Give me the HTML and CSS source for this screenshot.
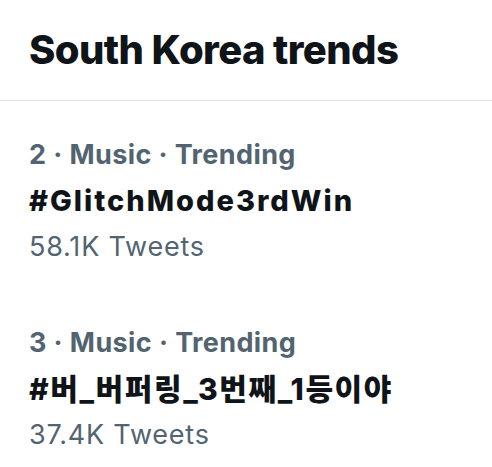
FILE: index.html
```html
<!DOCTYPE html>
<html>
<head>
  <meta name="viewport" content="width=device-width, initial-scale=1.0">
  <title>South Korea trends</title>
  <link rel="stylesheet" href="styles.css">
</head>
<body>
  <div class="panel">
    <!-- Header -->
    <div class="panel-header">
      <h1>South Korea trends</h1>
    </div>

    <!-- Trend list -->
    <div class="trend">
      <div class="meta">2 · Music · Trending</div>
      <div class="tag">#GlitchMode3rdWin</div>
      <div class="count">58.1K Tweets</div>
    </div>

    <div class="trend">
      <div class="meta">3 · Music · Trending</div>
      <div class="tag tag-ko">#버_버퍼링_3번째_1등이야</div>
      <div class="count">37.4K Tweets</div>
    </div>
  </div>
</body>
</html>
```

FILE: styles.css
```css
body {
  font-family: Inter, "Noto Sans CJK KR", sans-serif;
  background-color: #fff;
  color: #0f1419;
  margin: 0;
  padding: 0;
}

.panel {
  width: 100%;
}

.panel-header {
  height: 100px;
  padding: 0 29px;
  border-bottom: 1px solid #dfe1e3;
  display: flex;
  align-items: center;
}

h1 {
  margin: 0;
  font-size: 40px;
  font-weight: 800;
  letter-spacing: -0.6px;
  line-height: 1;
}

.trend {
  padding: 31px 29px 19px;
}

.meta,
.tag,
.count {
  line-height: 46px;
  white-space: nowrap;
}

.meta {
  font-size: 27px;
  font-weight: 700;
  letter-spacing: 0.4px;
  color: #536471;
}

.tag {
  font-size: 29px;
  font-weight: 800;
  letter-spacing: 2px;
  color: #0f1419;
}

.tag-ko {
  font-size: 30px;
  letter-spacing: 1.6px;
}

.count {
  font-size: 27px;
  font-weight: 400;
  letter-spacing: 0.8px;
  color: #536471;
}
```
